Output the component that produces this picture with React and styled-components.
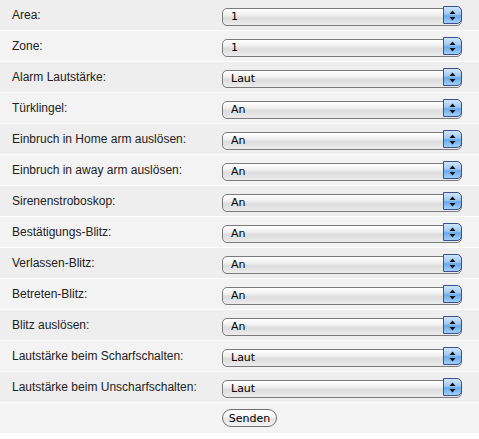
import React, { useState } from 'react';
import styled, { createGlobalStyle } from 'styled-components';

const GlobalStyle = createGlobalStyle`
  html, body {
    margin: 0;
    padding: 0;
    background: #ffffff;
  }
`;

const Form = styled.form`
  width: 479px;
  display: grid;
  gap: 1px;
  background: #ffffff;
`;

const Row = styled.div`
  display: grid;
  grid-template-columns: 222px 240px;
  align-items: center;
  height: 30px;
  background: ${(p) => (p.$odd ? '#f3f3f3' : '#eeeeee')};
`;

const Label = styled.label`
  padding-left: 12px;
  font-family: "Liberation Sans", Arial, sans-serif;
  font-size: 12px;
  color: #222222;
`;

const SelectWrap = styled.div`
  position: relative;
  height: 18px;
`;

const Select = styled.select`
  appearance: none;
  -webkit-appearance: none;
  width: 100%;
  height: 18px;
  margin: 0;
  padding: 0 24px 0 8px;
  border: 1px solid #7b7b7b;
  border-radius: 5px;
  background: linear-gradient(#ffffff 0%, #f1f1f1 35%, #dcdcdc 55%, #ececec 100%);
  box-shadow: inset 0 1px 0 #ffffff;
  font-family: "DejaVu Sans", Verdana, sans-serif;
  font-size: 11px;
  color: #000000;
  line-height: 16px;
  outline: none;
`;

const Arrows = styled.span`
  position: absolute;
  top: 0;
  right: 0;
  width: 19px;
  height: 18px;
  box-sizing: border-box;
  border: 1px solid #3d4f8c;
  border-radius: 0 5px 5px 0;
  background: linear-gradient(#cfe6fb 0%, #9dc8f3 45%, #6aa9ec 55%, #9fd0fb 100%);
  display: flex;
  align-items: center;
  justify-content: center;
  pointer-events: none;
`;

const ButtonRow = styled.div`
  display: grid;
  grid-template-columns: 222px auto;
  align-items: center;
  height: 30px;
  background: #f3f3f3;
`;

const SubmitButton = styled.button`
  grid-column: 2;
  justify-self: start;
  width: 55px;
  height: 18px;
  padding: 0;
  border: 1px solid #6f6f6f;
  border-radius: 9px;
  background: linear-gradient(#ffffff 0%, #f4f4f4 45%, #e2e2e2 55%, #f6f6f6 100%);
  font-family: "DejaVu Sans", Verdana, sans-serif;
  font-size: 11px;
  color: #000000;
  cursor: pointer;
`;

const Bottom = styled.div`
  height: 5px;
  background: #ffffff;
`;

const fields = [
  { name: 'area', label: 'Area:', options: ['1', '2', '3', '4'] },
  { name: 'zone', label: 'Zone:', options: ['1', '2', '3', '4'] },
  { name: 'alarm', label: 'Alarm Lautstärke:', options: ['Laut', 'Leise', 'Aus'] },
  { name: 'bell', label: 'Türklingel:', options: ['An', 'Aus'] },
  { name: 'home', label: 'Einbruch in Home arm auslösen:', options: ['An', 'Aus'] },
  { name: 'away', label: 'Einbruch in away arm auslösen:', options: ['An', 'Aus'] },
  { name: 'strobe', label: 'Sirenenstroboskop:', options: ['An', 'Aus'] },
  { name: 'confirm', label: 'Bestätigungs-Blitz:', options: ['An', 'Aus'] },
  { name: 'leave', label: 'Verlassen-Blitz:', options: ['An', 'Aus'] },
  { name: 'enter', label: 'Betreten-Blitz:', options: ['An', 'Aus'] },
  { name: 'trigger', label: 'Blitz auslösen:', options: ['An', 'Aus'] },
  { name: 'arm', label: 'Lautstärke beim Scharfschalten:', options: ['Laut', 'Leise', 'Aus'] },
  { name: 'disarm', label: 'Lautstärke beim Unscharfschalten:', options: ['Laut', 'Leise', 'Aus'] },
];

function ArrowIcon() {
  return (
    <svg width="7" height="11" viewBox="0 0 7 11">
      <path d="M3.5 0.5 L6.5 4 L0.5 4 Z" fill="#111" />
      <path d="M3.5 10.5 L6.5 7 L0.5 7 Z" fill="#111" />
    </svg>
  );
}

export default function App() {
  const [values, setValues] = useState(
    Object.fromEntries(fields.map((f) => [f.name, f.options[0]]))
  );

  const handleChange = (e) => {
    setValues({ ...values, [e.target.name]: e.target.value });
  };

  return (
    <>
      <GlobalStyle />
      <Form onSubmit={(e) => e.preventDefault()}>
        {fields.map((f, i) => (
          <Row key={f.name} $odd={i % 2 === 1}>
            <Label htmlFor={f.name}>{f.label}</Label>
            <SelectWrap>
              <Select id={f.name} name={f.name} value={values[f.name]} onChange={handleChange}>
                {f.options.map((o) => (
                  <option key={o} value={o}>{o}</option>
                ))}
              </Select>
              <Arrows>
                <ArrowIcon />
              </Arrows>
            </SelectWrap>
          </Row>
        ))}
        <ButtonRow>
          <SubmitButton type="submit">Senden</SubmitButton>
        </ButtonRow>
      </Form>
      <Bottom />
    </>
  );
}
